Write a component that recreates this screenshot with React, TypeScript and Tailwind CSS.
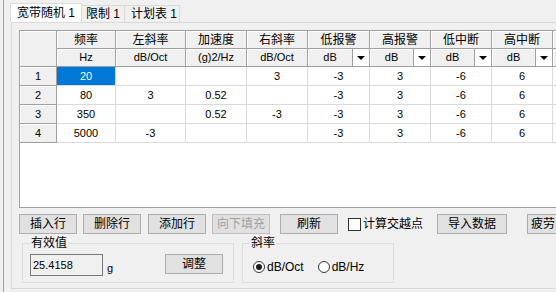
import React from "react";

const font = "font-['Liberation_Sans','Noto_Sans_CJK_SC',sans-serif]";

// column widths: row header + 8 data columns + clipped tail
const widths = [
  "w-[37px]",
  "w-[59px]",
  "w-[70px]",
  "w-[61px]",
  "w-[61px]",
  "w-[62px]",
  "w-[61px]",
  "w-[61px]",
  "w-[61px]",
  "w-[40px]",
];

const titles = ["频率", "左斜率", "加速度", "右斜率", "低报警", "高报警", "低中断", "高中断", ""];
const units = ["Hz", "dB/Oct", "(g)2/Hz", "dB/Oct"];

const rows = [
  ["20", "", "", "3", "-3", "3", "-6", "6", ""],
  ["80", "3", "0.52", "", "-3", "3", "-6", "6", ""],
  ["350", "", "0.52", "-3", "-3", "3", "-6", "6", ""],
  ["5000", "-3", "", "", "-3", "3", "-6", "6", ""],
];

const hdr =
  "shrink-0 flex items-center justify-center bg-[#f0f0f0] border-r border-b border-[#a0a0a0] shadow-[inset_1px_1px_0_#ffffff]";
const cell = "shrink-0 flex items-center justify-center border-r border-b border-[#dadada] text-[11px]";
const btn =
  "shrink-0 h-[20px] w-[58px] border border-[#adadad] bg-[#e1e1e1] flex items-center justify-center text-[12px]";

function Dropdown() {
  return (
    <div className="flex h-full w-full">
      <div className="flex-1 flex items-center justify-center border-r border-[#a0a0a0] text-[11px]">dB</div>
      <div className="w-[16px] bg-white flex items-center justify-center">
        <svg width="8" height="4" viewBox="0 0 8 4">
          <path d="M0 0H8L4 4Z" fill="#000" />
        </svg>
      </div>
    </div>
  );
}

function Grid() {
  return (
    <div className="h-[178px] border border-[#a0a0a0] border-r-0 bg-white overflow-hidden flex flex-col">
      <div className="flex">
        <div className={`${hdr} ${widths[0]} h-[36px]`} />
        <div className="flex flex-col">
          <div className="flex h-[18px]">
            {titles.map((t, i) => (
              <div key={i} className={`${hdr} ${widths[i + 1]} h-[18px] text-[12px]`}>
                {t}
              </div>
            ))}
          </div>
          <div className="flex h-[18px]">
            {titles.map((_, i) => (
              <div key={i} className={`${hdr} ${widths[i + 1]} h-[18px] text-[11px]`}>
                {i < 4 ? units[i] : i < 8 ? <Dropdown /> : ""}
              </div>
            ))}
          </div>
        </div>
      </div>
      {rows.map((r, ri) => (
        <div key={ri} className="flex h-[19px]">
          <div className={`${hdr} ${widths[0]} h-[19px] text-[11px]`}>{ri + 1}</div>
          {r.map((v, ci) => (
            <div
              key={ci}
              className={`${cell} ${widths[ci + 1]} h-[19px] ${
                ri === 0 && ci === 0 ? "bg-[#0078d7] text-white" : "bg-white"
              }`}
            >
              {v}
            </div>
          ))}
        </div>
      ))}
    </div>
  );
}

function Radio({ checked, label }: { checked?: boolean; label: string }) {
  return (
    <div className="flex items-center gap-[2px]">
      <div className="w-[12px] h-[12px] rounded-full border border-[#333] bg-white flex items-center justify-center">
        {checked && <div className="w-[6px] h-[6px] rounded-full bg-[#1a1a1a]" />}
      </div>
      <span className="text-[12px]">{label}</span>
    </div>
  );
}

export default function App() {
  return (
    <div className={`w-[556px] h-[292px] bg-[#f0f0f0] overflow-hidden pl-[3px] text-black ${font}`}>
      <div className="h-full border-l border-[#a0a0a0] pl-[6px] pt-[3px]">
        {/* tabs */}
        <div className="flex items-end h-[19px]">
          <div className="h-[19px] w-[72px] bg-white border border-b-0 border-[#d9d9d9] pl-[6px] flex items-center text-[12px]">
            宽带随机 1
          </div>
          <div className="h-[17px] w-[43px] border border-l-0 border-b-0 border-[#d9d9d9] pl-[4px] flex items-center text-[12px]">
            限制 1
          </div>
          <div className="h-[17px] w-[55px] border border-l-0 border-b-0 border-[#d9d9d9] pl-[6px] flex items-center text-[12px]">
            计划表 1
          </div>
        </div>
        {/* tab page */}
        <div className="ml-[1px] h-[267px] border border-r-0 border-[#d9d9d9] pl-[7px] pt-[7px] overflow-hidden">
          <Grid />
          <div className="flex items-center mt-[6px] h-[20px]">
            <div className={btn}>插入行</div>
            <div className={`${btn} ml-[6px]`}>删除行</div>
            <div className={`${btn} ml-[7px]`}>添加行</div>
            <div className={`${btn} ml-[6px] bg-[#cccccc] border-[#bfbfbf] text-[#a0a0a0]`}>向下填充</div>
            <div className={`${btn} ml-[10px]`}>刷新</div>
            <div className="ml-[10px] w-[13px] h-[13px] border border-[#333] bg-white shrink-0" />
            <span className="ml-[2px] text-[12px] shrink-0">计算交越点</span>
            <div className={`${btn} ml-[14px] w-[70px]`}>导入数据</div>
            <div className={`${btn} ml-[20px] w-[30px] justify-start pl-[3px]`}>疲劳</div>
          </div>
          <div className="flex mt-[2px]">
            <fieldset className="ml-[3px] w-[212px] h-[47px] border border-[#dcdcdc] px-[7px]">
              <legend className="px-[1px] text-[12px] leading-[15px] mt-[1px]">有效值</legend>
              <div className="flex items-start mt-[3px]">
                <div className="w-[73px] h-[22px] border border-[#7a7a7a] bg-[#f0f0f0] pl-[2px] pt-[2px] text-[11px]">
                  25.4158
                </div>
                <span className="ml-[4px] mt-[6px] text-[11px]">g</span>
                <div className={`${btn} ml-[52px] w-[57px]`}>调整</div>
              </div>
            </fieldset>
            <fieldset className="ml-[8px] w-[152px] h-[47px] border border-[#dcdcdc] px-[7px]">
              <legend className="px-[1px] text-[12px] leading-[15px] mt-[1px]">斜率</legend>
              <div className="flex items-center gap-[14px] mt-[7px] pl-[3px]">
                <Radio checked label="dB/Oct" />
                <Radio label="dB/Hz" />
              </div>
            </fieldset>
          </div>
        </div>
      </div>
    </div>
  );
}
